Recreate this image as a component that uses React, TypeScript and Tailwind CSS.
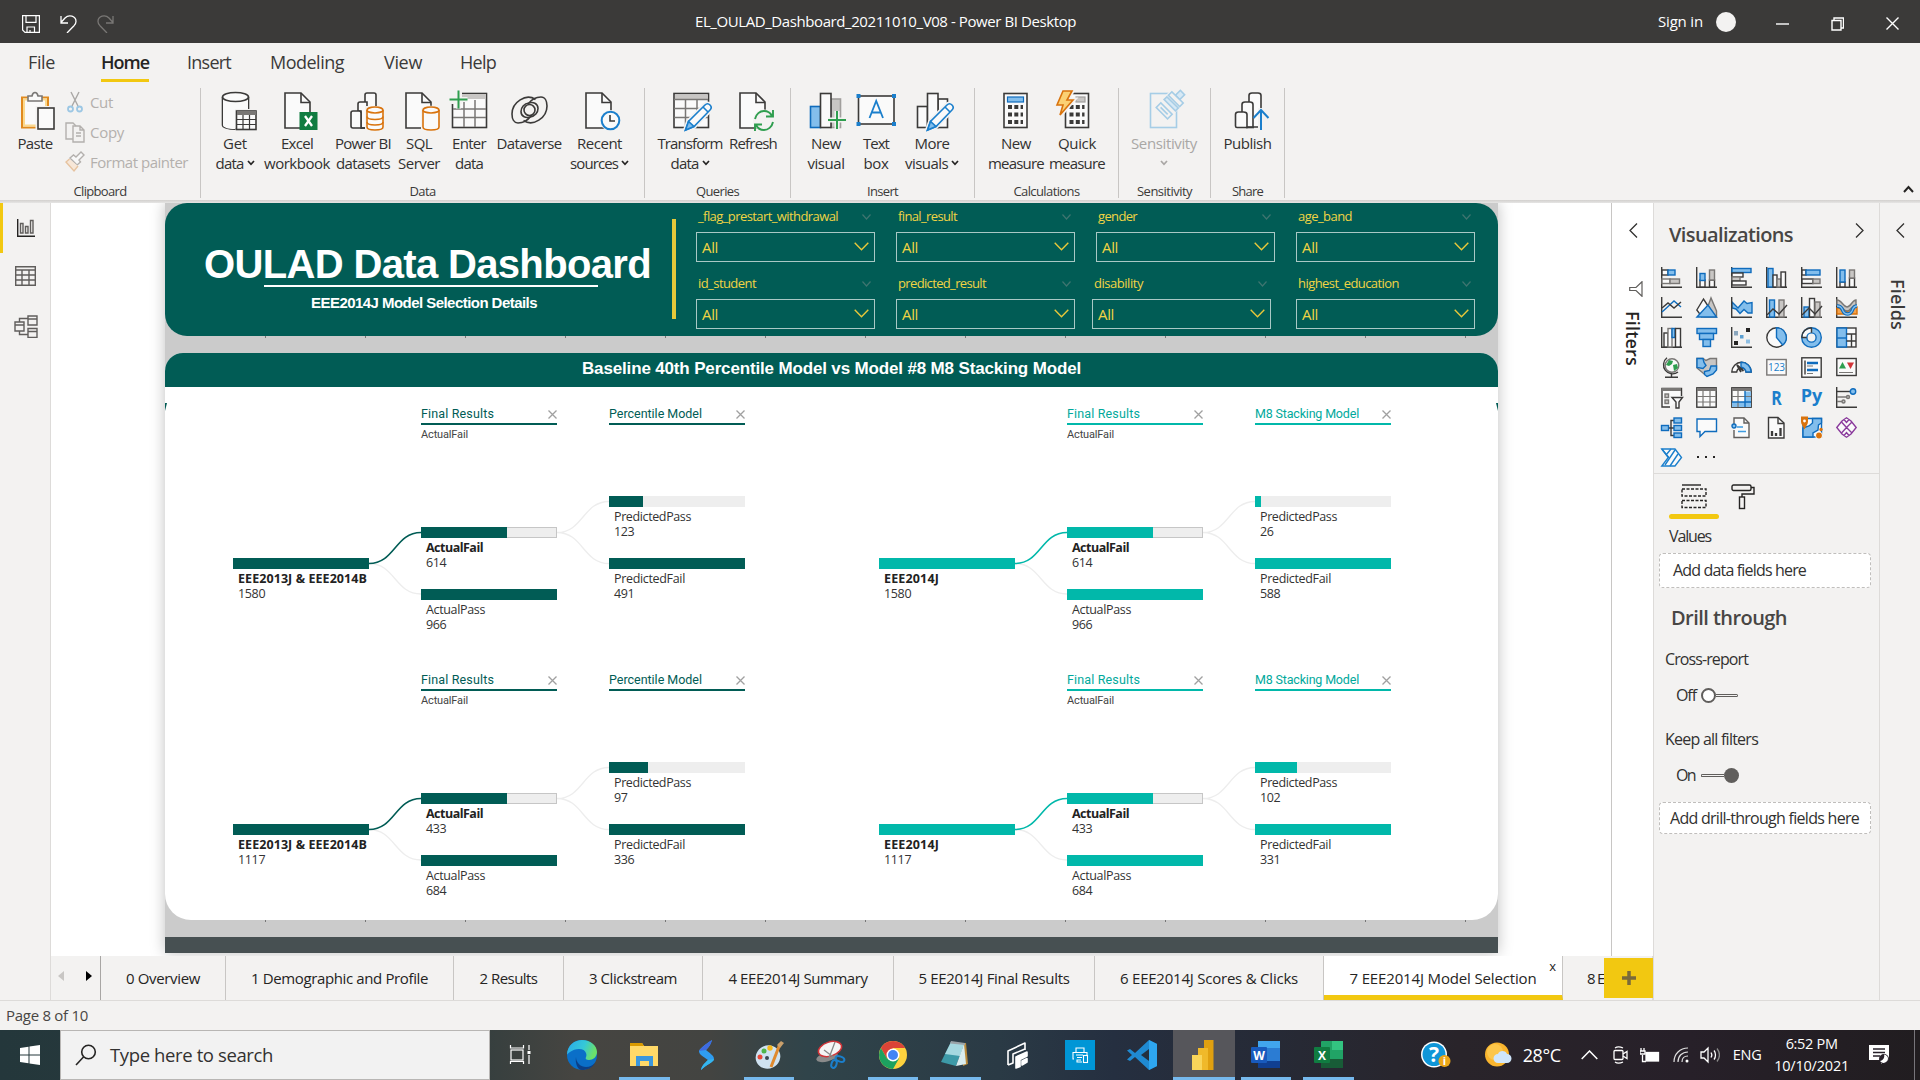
import React, { useLayoutEffect, useRef, useState } from "react";

/* Text whose tracking is tuned so that the run takes a given width. */
function Fit({ w, children, className = "" }: { w: number; children: string; className?: string }) {
  const ref = useRef<HTMLSpanElement>(null);
  const [ls, setLs] = useState(0);
  useLayoutEffect(() => {
    const el = ref.current;
    if (!el) return;
    const natural = el.getBoundingClientRect().width;
    setLs((w - natural) / children.length);
  }, [w, children]);
  return (
    <span className={"inline-block whitespace-nowrap " + className}>
      <span ref={ref} className="inline-block whitespace-pre" style={{ letterSpacing: ls + "px" }}>
        {children}
      </span>
    </span>
  );
}

function VFit({ h, children, className = "" }: { h: number; children: string; className?: string }) {
  const ref = useRef<HTMLSpanElement>(null);
  const [ls, setLs] = useState(0);
  useLayoutEffect(() => {
    if (!ref.current) return;
    setLs((h - ref.current.getBoundingClientRect().height) / children.length);
  }, [h, children]);
  return (
    <span ref={ref} className={"inline-block whitespace-nowrap [writing-mode:vertical-rl] " + className} style={{ letterSpacing: ls + "px" }}>
      {children}
    </span>
  );
}

const D = "#3b3a39";
const B = "#0f6cbd";

function Ico({ children, w = 40, h = 40 }: { children: React.ReactNode; w?: number; h?: number }) {
  return (
    <svg width={w} height={h} viewBox={`0 0 ${w} ${h}`} fill="none" stroke={D} strokeWidth="1.6" className="block shrink-0 overflow-visible">
      {children}
    </svg>
  );
}

const Chev = ({ c = "#252423" }: { c?: string }) => (
  <svg width="8" height="6" viewBox="0 0 8 6" fill="none" stroke={c} strokeWidth="1.7" className="block">
    <path d="M1 1 4 4.300 7 1" />
  </svg>
);

const Sheet = ({ x }: { x: number }) => (
  <g transform={`translate(${x} 0)`}>
    <path d="M1 2h16l9 9v26H1z" fill="#fafafa" />
    <path d="M17 2v9.500h9" />
  </g>
);
const Cyl = ({ bands = false }: { bands?: boolean }) => (
  <g stroke="#d9730d" fill="#fafafa">
    <path d="M24 19v17c0 2 3.500 3 8 3s8-1 8-3V19" stroke="#d9730d" />
    <ellipse cx="32" cy="19" rx="8" ry="3" />
    {bands && <path d="M24 25.500c0 2 3.500 3 8 3s8-1 8-3M24 31c0 2 3.500 3 8 3s8-1 8-3" fill="none" />}
  </g>
);
const Pencil = ({ dx = 0 }: { dx?: number }) => (
  <g transform={`translate(${dx} 0)`}>
    <path d="M15.500 39l3-8.500L35 14c1.500-1.500 3.500-1.500 5 0s1.500 3.500 0 5L24 35.500z" fill="#fafafa" stroke="#f3f2f1" strokeWidth="5" />
    <path d="M15.500 39l3-8.500L35 14c1.500-1.500 3.500-1.500 5 0s1.500 3.500 0 5L24 35.500z" fill="#fafafa" stroke="#1b7fcc" />
    <path d="M15.500 39l3-8.500 5.500 5z" fill="#83beec" stroke="#1b7fcc" />
    <path d="M33 16l5 5" stroke="#1b7fcc" />
  </g>
);
const Plus = ({ x, y, r = 9 }: { x: number; y: number; r?: number }) => (
  <g>
    <path d={`M${x - r} ${y}h${2 * r}M${x} ${y - r}v${2 * r}`} stroke="#f3f2f1" strokeWidth="5" />
    <path d={`M${x - r} ${y}h${2 * r}M${x} ${y - r}v${2 * r}`} stroke="#2f9e4f" strokeWidth="2" />
  </g>
);

const R: Record<string, React.ReactNode> = {
  paste: (
    <Ico>
      <rect x="7" y="6.500" width="26" height="30" fill="#fafafa" stroke="#e08a1e" strokeWidth="2" />
      <rect x="9" y="8.500" width="22" height="26" stroke="#fbd98e" strokeWidth="2" />
      <path d="M13 10V5h4c.5-2.500 2-3.500 3-3.500S22.500 2.500 23 5h4v5z" fill="#fafafa" stroke="#797775" />
      <rect x="22.500" y="17" width="17" height="22" fill="#fafafa" stroke="#f3f2f1" strokeWidth="4" />
      <rect x="23" y="17" width="16" height="21" fill="#fafafa" />
    </Ico>
  ),
  getdata: (
    <Ico>
      <path d="M7.500 6v28c0 2.500 5.500 4.300 13 4.300M33.500 6v12" />
      <path d="M8 6v28c0 2.500 5 4 12 4V18h13V6z" fill="#fafafa" stroke="none" />
      <ellipse cx="20.500" cy="6" rx="13" ry="4.500" fill="#fafafa" />
      <rect x="21.500" y="20" width="19.500" height="18.500" fill="#fafafa" />
      <path d="M22 22h19" strokeWidth="4" stroke="#797775" />
      <path d="M22 28.500h19M22 33.500h19M28 24v14M34.500 24v14" strokeWidth="1.200" />
    </Ico>
  ),
  excel: (
    <Ico>
      <Sheet x={7} />
      <rect x="22.500" y="21" width="18" height="18" fill="#107c41" stroke="none" />
      <path d="M28 25l7 10M35 25l-7 10" stroke="#fff" strokeWidth="2.300" />
    </Ico>
  ),
  pbi: (
    <Ico>
      <path d="M22 11V4c0-1 .8-2 2-2h7c1.200 0 2 1 2 2v12H22z" fill="#fafafa" />
      <path d="M15 20v-7c0-1 .8-2 2-2h7v26h-6V20z" fill="#fafafa" />
      <path d="M8 22c0-1 .8-2 2-2h6c1.200 0 2 1 2 2v15H10c-1.200 0-2-.8-2-2z" fill="#fafafa" />
      <path d="M18 37h5" />
      <rect x="22" y="15" width="19" height="25" fill="#f3f2f1" stroke="none" />
      <Cyl bands />
    </Ico>
  ),
  sql: (
    <Ico>
      <Sheet x={6} />
      <path d="M22 40V18c2-4 16-4 19-1v22z" fill="#f3f2f1" stroke="none" />
      <Cyl />
    </Ico>
  ),
  enter: (
    <Ico>
      <rect x="3.500" y="2.500" width="34" height="34" fill="#fafafa" />
      <rect x="13" y="3" width="24" height="5" fill="#c8c6c4" stroke="none" />
      <path d="M4 18h33M4 26.500h33M15 9v27M26 9v27" stroke="#797775" strokeWidth="1.500" />
      <rect x="0" y="0" width="13" height="13" fill="#f3f2f1" stroke="none" />
      <Plus x={9.500} y={8.500} />
    </Ico>
  ),
  dataverse: (
    <Ico>
      <g strokeWidth="1.600" fill="none">
        <path id="swirl" d="M26.500 8.500C17 2 3 11 3 23c0 5 2 9 6 9 6 0 10-3 13-7M22 25.500c-5 2.500-10 0-10-5 0-4 3-8 8-8.500" />
        <path d="M26.500 8.500C17 2 3 11 3 23c0 5 2 9 6 9 6 0 10-3 13-7M22 25.500c-5 2.500-10 0-10-5 0-4 3-8 8-8.500" transform="rotate(180 20.500 19)" />
        <circle cx="20.500" cy="19" r="5.500" />
      </g>
    </Ico>
  ),
  recent: (
    <Ico>
      <Sheet x={5} />
      <circle cx="30.500" cy="29.500" r="10.500" fill="#f3f2f1" stroke="none" />
      <circle cx="30.500" cy="29.500" r="8.800" fill="#fafafa" stroke="#1b7fcc" strokeWidth="2" />
      <path d="M30 24v6h5" />
    </Ico>
  ),
  transform: (
    <Ico>
      <rect x="4" y="2.500" width="34.500" height="34" fill="#fafafa" />
      <rect x="5" y="3.500" width="33" height="4.500" fill="#c8c6c4" stroke="none" />
      <path d="M4 8.500h34M4 17.500h34M4 26.500h34M15.500 9v27M27 9v27" stroke="#797775" strokeWidth="1.500" />
      <Pencil />
    </Ico>
  ),
  refresh: (
    <Ico>
      <Sheet x={6} />
      <circle cx="31" cy="29.500" r="11" fill="#f3f2f1" stroke="none" />
      <path d="M22 28c1-5 5-8 9-8 3.500 0 6.500 2 8 5M40 31c-1 5-5 8-9 8-3.500 0-6.500-2-8-5M40 19v6.500h-7M22 40v-6.500h7" stroke="#2f9e4f" strokeWidth="1.900" />
    </Ico>
  ),
  newvis: (
    <Ico>
      <rect x="4.500" y="15.500" width="10" height="21" fill="#83beec" stroke={B} />
      <rect x="25" y="8" width="9.500" height="28.500" fill="#c8c6c4" stroke="#a19f9d" />
      <rect x="14.500" y="2.500" width="10.500" height="34" fill="#fafafa" />
      <Plus x={31} y={29} />
    </Ico>
  ),
  textbox: (
    <Ico>
      <rect x="2.500" y="5" width="35.500" height="28" fill="#fafafa" />
      <path d="M13.500 27 20.200 10l6.800 17M15.800 21.500h9" stroke="#1b7fcc" strokeWidth="1.800" />
      <g fill="#1b7fcc" stroke="none">
        <rect x="0.500" y="3" width="4" height="4" /><rect x="36" y="3" width="4" height="4" />
        <rect x="0.500" y="31" width="4" height="4" /><rect x="36" y="31" width="4" height="4" />
      </g>
    </Ico>
  ),
  morevis: (
    <Ico>
      <rect x="5.500" y="15.500" width="10" height="21" fill="#fafafa" />
      <rect x="26" y="8" width="9.500" height="28.500" fill="#fafafa" />
      <rect x="15.500" y="2.500" width="10.500" height="34" fill="#fafafa" />
      <Pencil />
    </Ico>
  ),
  calc: (
    <Ico>
      <rect x="8" y="2.500" width="23" height="34" fill="#fafafa" />
      <rect x="11.500" y="6" width="16" height="5" fill="#83beec" stroke={B} strokeWidth="1.200" />
      <path d="M12 16h15M12 23.500h15M12 31h15" strokeWidth="4" strokeDasharray="4 2.300" />
    </Ico>
  ),
  quick: (
    <Ico>
      <rect x="8.500" y="2.500" width="23" height="34" fill="#fafafa" />
      <rect x="19" y="6" width="9" height="5" fill="#c8c6c4" stroke="#a19f9d" strokeWidth="1.200" />
      <path d="M12.500 16h15M12.500 23.500h15M12.500 31h15" strokeWidth="4" strokeDasharray="4 2.300" />
      <path d="M6 0h9l-5 9h6L3 24l3-10H0z" fill="#fbd98e" stroke="#f3f2f1" strokeWidth="5" />
      <path d="M6 0h9l-5 9h6L3 24l3-10H0z" fill="#fbd174" stroke="#d9730d" />
    </Ico>
  ),
  sens: (
    <Ico>
      <g stroke="#a6cde6">
        <rect x="6.500" y="2.500" width="26" height="34" />
        <g transform="rotate(-45 29 9)"><rect x="21" y="2" width="16" height="16" fill="#f3f2f1" stroke="#f3f2f1" strokeWidth="3" /></g>
        <g transform="translate(0 2) rotate(45 30 8)">
          <rect x="27" y="-4" width="6" height="7" fill="#d7e9f5" />
          <rect x="22" y="3" width="16" height="5" fill="#f3f2f1" />
          <rect x="22" y="10" width="16" height="4" fill="#d7e9f5" />
        </g>
        <g transform="rotate(-45 20 20)"><rect x="17" y="12" width="6.500" height="16" /><path d="M20.200 15v10" /></g>
      </g>
    </Ico>
  ),
  publish: (
    <Ico>
      <path d="M21 11V4.500c0-1 1-2.500 3-2.500h6c2 0 3 1 3 2.500V36H21z" fill="#fafafa" />
      <path d="M14 21v-7.500c0-1 1-2.500 3-2.500h5c1.500 0 3 1 3 2.500V36H14z" fill="#fafafa" />
      <path d="M7.500 23.500c0-1 1-2.500 3-2.500h5c2 0 3.500 1 3.500 2.500V36.500H9c-1 0-1.500-.5-1.500-1.500z" fill="#fafafa" />
      <path d="M18 36.500h8" />
      <path d="M33 39V17" stroke="#f3f2f1" strokeWidth="6" />
      <path d="M33 39V19M25.500 27 33 19l7.500 8" stroke="#1b7fcc" strokeWidth="2" />
    </Ico>
  ),
};

type Btn = { k: string; w: string; a: [string, number]; b?: [string, number]; chev?: boolean; dim?: boolean };

function RibbonButton({ k, w, a, b, chev, dim }: Btn) {
  return (
    <div className={"flex flex-col items-center " + w + (dim ? " text-[#a9a7a5]" : " text-[#323130]")}>
      {R[k]}
      <div className="mt-[2px] flex h-5 items-center text-[15px]"><Fit w={a[1]}>{a[0]}</Fit></div>
      <div className="flex h-5 items-center gap-[3px] text-[15px]">
        {b && <Fit w={b[1]}>{b[0]}</Fit>}
        {chev && <Chev c={dim ? "#a9a7a5" : "#252423"} />}
      </div>
    </div>
  );
}

function Group({ w, label, lw, pad, buttons }: { w: string; label: string; lw: number; pad: string; buttons: Btn[] }) {
  return (
    <div className={"flex h-[110px] shrink-0 flex-col border-r border-[#c8c6c4] " + w}>
      <div className={"flex h-[93px] pt-[3px] " + pad}>
        {buttons.map((b) => <RibbonButton key={b.k} {...b} />)}
      </div>
      <div className="flex h-[17px] items-center justify-center pt-1 text-[13px] text-[#3b3a39]"><Fit w={lw}>{label}</Fit></div>
    </div>
  );
}

function Ribbon() {
  return (
    <div className="flex h-[157px] flex-col bg-[#f3f2f1]">
      <div className="flex h-[45px] items-start pl-[28px] text-[18px] text-[#3b3a39]">
        {([["File", 27, "mr-[46px]"], ["Home", 48, "mr-[38px]"], ["Insert", 44, "mr-[39px]"], ["Modeling", 74, "mr-[40px]"], ["View", 38, "mr-[38px]"], ["Help", 36, ""]] as [string, number, string][]).map(([t, w, m]) => (
          <div key={t} className={"flex h-[39px] items-center " + m + (t === "Home" ? " border-b-[3px] border-[#f2c811] pt-[3px] font-semibold text-[#252423]" : "")}>
            <Fit w={w}>{t}</Fit>
          </div>
        ))}
      </div>
      <div className="flex h-[112px]">
        <div className="flex h-[110px] w-[201px] shrink-0 flex-col border-r border-[#c8c6c4]">
          <div className="flex h-[93px] pl-3 pt-[3px]">
            <RibbonButton k="paste" w="w-[46px]" a={["Paste", 35]} />
            <div className="-mt-1 flex flex-col pl-[7px] text-[15px] text-[#b3b0ad]">
              <div className="flex h-[30px] items-center gap-[5px]">
                <svg width="20" height="22" viewBox="0 0 20 22" fill="none" stroke="#a9a7a5" strokeWidth="1.400"><path d="M6 1l7 14M14 1 7 15" /><circle cx="5.500" cy="18" r="2.500" stroke="#9cc7e4" strokeWidth="1.800" /><circle cx="14.500" cy="18" r="2.500" stroke="#9cc7e4" strokeWidth="1.800" /></svg>
                <Fit w={23}>Cut</Fit>
              </div>
              <div className="flex h-[30px] items-center gap-[5px]">
                <svg width="20" height="22" viewBox="0 0 20 22" fill="none" stroke="#b3b0ad" strokeWidth="1.400"><path d="M8 18H1V2h7l3 3" /><path d="M8 5h7l4 4v12H8zM15 5v4h4M11 12h5M11 15h5" /></svg>
                <Fit w={34}>Copy</Fit>
              </div>
              <div className="flex h-[30px] items-center gap-[5px]">
                <svg width="20" height="22" viewBox="0 0 20 22" fill="none" stroke="#b3b0ad" strokeWidth="1.400"><path d="M11 6l5-5 3 3-5 5 1.500 2-3.500 3-7-7 3.500-3z" fill="#f8f8f8" /><path d="M4.500 8 1 11l8 9 4-5" stroke="#e6c3a0" fill="#f7e7d8" /></svg>
                <Fit w={98}>Format painter</Fit>
              </div>
            </div>
          </div>
          <div className="flex h-[17px] items-center justify-center pt-1 text-[13px] text-[#3b3a39]"><Fit w={53}>Clipboard</Fit></div>
        </div>
        <Group w="w-[444px]" label="Data" lw={26} pad="pl-[5px]" buttons={[
          { k: "getdata", w: "w-[58px]", a: ["Get", 24], b: ["data", 28], chev: true },
          { k: "excel", w: "w-[66px]", a: ["Excel", 32], b: ["workbook", 66] },
          { k: "pbi", w: "w-[66px]", a: ["Power BI", 56], b: ["datasets", 54] },
          { k: "sql", w: "w-[46px]", a: ["SQL", 26], b: ["Server", 42] },
          { k: "enter", w: "w-[54px]", a: ["Enter", 34], b: ["data", 28] },
          { k: "dataverse", w: "w-[66px]", a: ["Dataverse", 65] },
          { k: "recent", w: "w-[75px]", a: ["Recent", 45], b: ["sources", 48], chev: true },
        ]} />
        <Group w="w-[146px]" label="Queries" lw={43} pad="pl-[10px]" buttons={[
          { k: "transform", w: "w-[70px]", a: ["Transform", 65], b: ["data", 28], chev: true },
          { k: "refresh", w: "w-[56px]", a: ["Refresh", 48] },
        ]} />
        <Group w="w-[184px]" label="Insert" lw={31} pad="pl-[6px]" buttons={[
          { k: "newvis", w: "w-[58px]", a: ["New", 30], b: ["visual", 37] },
          { k: "textbox", w: "w-[42px]", a: ["Text", 26], b: ["box", 25] },
          { k: "morevis", w: "w-[70px]", a: ["More", 35], b: ["visuals", 43], chev: true },
        ]} />
        <Group w="w-[144px]" label="Calculations" lw={66} pad="pl-[9px]" buttons={[
          { k: "calc", w: "w-[64px]", a: ["New", 30], b: ["measure", 56] },
          { k: "quick", w: "w-[58px]", a: ["Quick", 38], b: ["measure", 56] },
        ]} />
        <Group w="w-[92px]" label="Sensitivity" lw={55} pad="pl-0" buttons={[
          { k: "sens", w: "w-[90px]", a: ["Sensitivity", 66], chev: true, dim: true },
        ]} />
        <Group w="w-[74px]" label="Share" lw={31} pad="pl-0" buttons={[
          { k: "publish", w: "w-[73px]", a: ["Publish", 48] },
        ]} />
        <div className="flex flex-1 items-end justify-end pb-[7px] pr-[6px]">
          <svg width="11" height="8" viewBox="0 0 11 8" fill="none" stroke="#252423" strokeWidth="2"><path d="M1 7l4.500-5L10 7" /></svg>
        </div>
      </div>
    </div>
  );
}

function TitleBar() {
  return (
    <div className="flex h-[43px] items-center bg-[#3b3a39] text-[15px] text-white">
      <div className="flex w-[695px] items-center gap-[20px] pl-[22px]">
        <svg width="18" height="18" viewBox="0 0 18 18" fill="none" stroke="#fff" strokeWidth="1.200" className="mt-1"><path d="M.6.600h16.800v16.800H3L.6 15zM4 .600v6.800h10V.600M5 17v-5h7.500v5M8 17v-2" /></svg>
        <svg width="17" height="18" viewBox="0 0 17 18" fill="none" stroke="#fff" strokeWidth="1.300" className="mt-1"><path d="M1 1v7h7M1 7.500l4-4.500C9-1 16 1 16 6.500c0 2-1 3-2 4.200L7 18" /></svg>
        <svg width="17" height="18" viewBox="0 0 17 18" fill="none" stroke="#797775" strokeWidth="1.300" className="mt-1"><path d="M16 1v7H9M16 7.500l-4-4.500C8-1 1 1 1 6.500c0 2 1 3 2 4.200L10 18" /></svg>
      </div>
      <div className="w-[963px]"><Fit w={381}>EL_OULAD_Dashboard_20211010_V08 - Power BI Desktop</Fit></div>
      <Fit w={45}>Sign in</Fit>
      <div className="ml-[13px] h-5 w-5 rounded-full bg-[#f3f2f1]" />
      <div className="flex flex-1 items-center justify-between pl-[40px] pr-[21px] pt-1">
        <svg width="13" height="13" viewBox="0 0 13 13" stroke="#fff" strokeWidth="1.400"><path d="M0 7h13" /></svg>
        <svg width="13" height="14" viewBox="0 0 13 14" fill="none" stroke="#fff" strokeWidth="1.400"><path d="M1 3.500h9v9.500H1zM3 3V1h9.500v10H10" /></svg>
        <svg width="13" height="13" viewBox="0 0 13 13" stroke="#fff" strokeWidth="1.400"><path d="M.5.500l12 12M12.500.500l-12 12" /></svg>
      </div>
    </div>
  );
}

function Slicer({ name, w, cls = "" }: { name: string; w: number; cls?: string }) {
  return (
    <div className={"w-[179px] " + cls}>
      <div className="flex h-[28px] items-center justify-between pl-[2px] pr-1 text-[13px] text-[#f0d444]">
        <Fit w={w}>{name}</Fit>
        <svg width="9" height="6" viewBox="0 0 9 6" fill="none" stroke="#3f7570" strokeWidth="1.200"><path d="M.5.500l4 4.500 4-4.500" /></svg>
      </div>
      <div className="mt-px flex h-[30px] items-center justify-between border border-[#a9c8c5] pl-[5px] pr-[5px] pt-px text-[15px] text-[#f0d444]">
        <Fit w={16}>All</Fit>
        <svg width="15" height="9" viewBox="0 0 15 9" fill="none" stroke="#e8c83a" strokeWidth="1.400" className="mb-[2px]"><path d="M.7.700l6.800 7 6.800-7" /></svg>
      </div>
    </div>
  );
}

type Leaf = { label: string; value: string; w: number };
type Tree = { root: string; rw: number; total: string; fail: string; pass: string; ratio: number; pp: string; pf: string; pr: number; head: string; hw: number; bar: string; ink: string; stroke: string };

function Node({ at, leaf, bar, fill = 1, bold = false, outlined = false }: { at: string; leaf: Leaf; bar: string; fill?: number; bold?: boolean; outlined?: boolean }) {
  return (
    <div className={"absolute w-[135.500px] text-[12.500px] leading-[15px] text-[#333] " + at}>
      <div className={"h-[11px] bg-[#eeeeee] " + (outlined ? "outline outline-1 -outline-offset-1 outline-[#c6c6c6]" : "")}>
        <div className={"relative h-full " + bar} style={{ width: fill * 100 + "%" }} />
      </div>
      <div className={"pl-[5px] pt-[2px] " + (bold ? "font-bold text-[#222]" : "")}><Fit w={leaf.w}>{leaf.label}</Fit></div>
      <div className="pl-[5px]"><Fit w={leaf.value.length * 6.8}>{leaf.value}</Fit></div>
    </div>
  );
}

function Head({ at, t, w, ink, bar }: { at: string; t: string; w: number; ink: string; bar: string }) {
  return (
    <div className={"absolute w-[136px] font-['Roboto'] text-[12.500px] " + at}>
      <div className={"flex h-[19px] items-center justify-between pt-px " + ink}>
        <Fit w={w}>{t}</Fit>
        <svg width="9" height="9" viewBox="0 0 9 9" stroke="#a0a0a0" strokeWidth="1.300"><path d="M.5.500l8 8M8.500.500l-8 8" /></svg>
      </div>
      <div className={"h-[2px] " + bar} />
    </div>
  );
}

/* Decomposition tree; nodes sit on a free 520x240 canvas. */
function DecompTree({ t, at }: { t: Tree; at: string }) {
  return (
    <div className={"absolute h-[240px] w-[520px] " + at}>
      <svg width="520" height="240" viewBox="0 0 520 240" fill="none" className="absolute left-0 top-0">
        <path d="M136 159.500C162 159.500 162 190 188 190M324 128.500C350 128.500 350 97.500 376 97.500M324 128.500C350 128.500 350 159.500 376 159.500" stroke="#ededed" strokeWidth="1.300" />
        <path d="M136 159.500C162 159.500 162 128.500 188 128.500" stroke={t.stroke} strokeWidth="1.600" />
      </svg>
      <Head at="left-[188px] top-0" t="Final Results" w={73} ink={t.ink} bar={t.bar} />
      <Head at="left-[376px] top-0" t={t.head} w={t.hw} ink={t.ink} bar={t.bar} />
      <div className="absolute left-[188px] top-[23px] font-['Roboto'] text-[11px] leading-4 text-[#444]"><Fit w={47}>ActualFail</Fit></div>
      <Node at="left-0 top-[154px]" leaf={{ label: t.root, value: t.total, w: t.rw }} bar={t.bar} bold />
      <Node at="left-[188px] top-[123px]" leaf={{ label: "ActualFail", value: t.fail, w: 57 }} bar={t.bar} fill={t.ratio} bold outlined />
      <Node at="left-[188px] top-[185px]" leaf={{ label: "ActualPass", value: t.pass, w: 59 }} bar={t.bar} />
      <Node at="left-[376px] top-[92px]" leaf={{ label: "PredictedPass", value: t.pp, w: 77 }} bar={t.bar} fill={t.pr} />
      <Node at="left-[376px] top-[154px]" leaf={{ label: "PredictedFail", value: t.pf, w: 71 }} bar={t.bar} />
    </div>
  );
}

const dark = { bar: "bg-[#015c55]", ink: "text-[#015c55]", stroke: "#015c55", root: "EEE2013J & EEE2014B", rw: 129, head: "Percentile Model", hw: 93 };
const lite = { bar: "bg-[#01b8aa]", ink: "text-[#01a99c]", stroke: "#01b8aa", root: "EEE2014J", rw: 55, head: "M8 Stacking Model", hw: 104 };

const Ticks = () => (
  <div className="flex h-1 justify-between pl-[100px] pr-[32px]">
    {Array.from({ length: 13 }, (_, i) => <div key={i} className="h-[2px] w-px bg-[#777]" />)}
  </div>
);

function Report() {
  return (
    <div className="flex h-[750px] w-[1333px] shrink-0 flex-col bg-[#cbcbcb] shadow-[0_0_14px_rgba(0,0,0,0.25)]">
      <div className="flex h-[133px] shrink-0 rounded-[22px] bg-[#015c55]">
        <div className="flex w-[507px] flex-col items-center pl-[18px] font-['Liberation_Sans'] font-bold text-white">
          <div className="mt-[37px] h-[45px] text-[40px] leading-[48px]"><Fit w={447}>OULAD Data Dashboard</Fit></div>
          <div className="ml-[6px] h-[2px] w-[334px] bg-white" />
          <div className="mr-[7px] mt-[5px] text-[15px] leading-[22px]"><Fit w={226}>EEE2014J Model Selection Details</Fit></div>
        </div>
        <div className="mt-[16px] h-[100px] w-1 bg-[#e6c93a]" />
        <div className="ml-[20px] flex flex-col">
          <div className="flex gap-[21px]">
            <Slicer name="_flag_prestart_withdrawal" w={140} />
            <Slicer name="final_result" w={59} />
            <Slicer name="gender" w={39} />
            <Slicer name="age_band" w={54} />
          </div>
          <div className="flex gap-[21px] pt-[8px]">
            <Slicer name="id_student" w={58} />
            <Slicer name="predicted_result" w={88} />
            <Slicer name="disability" w={49} cls="-ml-1 mr-1" />
            <Slicer name="highest_education" w={101} />
          </div>
        </div>
      </div>
      <div className="h-[17px] shrink-0"><Ticks /></div>
      <div className="flex h-[567px] shrink-0 flex-col overflow-hidden rounded-b-[26px] rounded-t-[18px] bg-white">
        <div className="flex h-[34px] shrink-0 items-center justify-center bg-[#015c55] pb-[3px] font-['Liberation_Sans'] text-[17px] font-bold text-white">
          <Fit w={499}>Baseline 40th Percentile Model vs Model #8 M8 Stacking Model</Fit>
        </div>
        <div className="relative flex-1">
          <div className="absolute left-0 top-[16px] h-2 w-[2px] bg-[#015c55] [clip-path:polygon(0_0,100%_0,0_100%)]" />
          <div className="absolute right-0 top-[16px] h-2 w-[2px] bg-[#015c55] [clip-path:polygon(0_0,100%_0,100%_100%)]" />
          <DecompTree at="left-[68px] top-[17px]" t={{ ...dark, total: "1580", fail: "614", pass: "966", ratio: 0.637, pp: "123", pf: "491", pr: 0.25 }} />
          <DecompTree at="left-[714px] top-[17px]" t={{ ...lite, total: "1580", fail: "614", pass: "966", ratio: 0.637, pp: "26", pf: "588", pr: 0.044 }} />
          <DecompTree at="left-[68px] top-[283px]" t={{ ...dark, total: "1117", fail: "433", pass: "684", ratio: 0.633, pp: "97", pf: "336", pr: 0.289 }} />
          <DecompTree at="left-[714px] top-[283px]" t={{ ...lite, total: "1117", fail: "433", pass: "684", ratio: 0.633, pp: "102", pf: "331", pr: 0.308 }} />
        </div>
      </div>
      <div className="h-[17px] shrink-0"><Ticks /></div>
      <div className="h-4 bg-[#475052]" />
    </div>
  );
}

const L = "#83beec";
const G = "#c8c6c4";
const W = "#fafafa";
const axis = <path d="M.7 0v20.300H21" />;

const V: React.ReactNode[] = [
  <>{axis}<rect x="1" y="3" width="6" height="5" fill={W} /><rect x="7" y="3" width="7" height="5" fill={L} stroke={B} /><rect x="1" y="12" width="8" height="4.500" fill={W} stroke="#797775" /><rect x="9" y="12" width="9.500" height="4.500" fill={G} stroke="#797775" /></>,
  <>{axis}<rect x="4" y="13" width="5" height="7" fill={W} /><rect x="4" y="6.500" width="5" height="7" fill={L} stroke={B} /><rect x="13.500" y="13" width="5" height="7" fill={W} /><rect x="13.500" y="3" width="5" height="10" fill={G} stroke="#797775" /></>,
  <>{axis}<rect x="1" y="1.500" width="19" height="4" fill={L} stroke={B} /><rect x="1" y="6" width="11" height="4" fill={W} /><rect x="1" y="10" width="8" height="4" fill={G} stroke="#797775" /><rect x="1" y="14" width="14" height="4" fill={W} /></>,
  <>{axis}<rect x="2" y="1.500" width="5" height="18.500" fill={L} stroke={B} /><rect x="7" y="8" width="4" height="12" fill={W} /><rect x="11" y="12" width="4" height="8" fill={G} stroke="#797775" /><rect x="15" y="5" width="4.500" height="15" fill={W} /></>,
  <>{axis}<rect x="1" y="3" width="4" height="5" fill={W} /><rect x="5" y="3" width="14" height="5" fill={L} stroke={B} /><rect x="1" y="12" width="11" height="4.500" fill={W} /><rect x="12" y="12" width="7" height="4.500" fill={G} stroke="#797775" /></>,
  <>{axis}<rect x="4" y="15" width="5" height="5" fill={W} /><rect x="4" y="3" width="5" height="12" fill={L} stroke={B} /><rect x="13.500" y="11" width="5" height="9" fill={W} /><rect x="13.500" y="3" width="5" height="8" fill={G} stroke="#797775" /></>,
  <>{axis}<path d="M1 15 6 10.500 13 4l7 6" stroke={B} /><path d="M1 11l6-5 6 5 7-6" /></>,
  <><path d="M8 20 15 1l5.500 13v6z" fill={G} stroke="#797775" /><path d="M.8 13 7.500 2 14 12 6 20z" fill={W} /><path d="M1 20 12 8l8.500 12z" fill={L} stroke={B} /></>,
  <><path d="M1 5l6 6 6-7 3 2.500 5-1V16h-4l-4-3.500-4 4-4-4.500-4-1z" fill={L} stroke={B} />{axis}</>,
  <>{axis}<rect x="3.500" y="3" width="5" height="17" fill={L} stroke={B} /><rect x="13" y="3" width="5" height="17" fill={G} stroke="#797775" /><path d="M1 18l6-6 6 5 8-9" /></>,
  <>{axis}<rect x="3" y="10" width="5" height="10" fill={L} stroke={B} /><rect x="8.500" y="1.500" width="5" height="18.500" fill={W} /><rect x="14" y="5" width="5" height="15" fill={G} stroke="#797775" /><path d="M1 18l7-7 6 6 7-8" /></>,
  <>{axis}<path d="M1 11h6l4 4 5-5h5v7H1z" fill="#f3a14a" stroke="#d9730d" /><path d="M1 3c5 0 6 7 10 7s5-7 9-7v5c-4 0-5 6-9 6S6 8 1 8z" fill={G} stroke="#797775" /><path d="M1 9c5 0 5 3 6 5 2 4 7 4 9 0 1-3 2-5 5-5" stroke={B} strokeWidth="3.500" /><path d="M1 9c5 0 5 3 6 5 2 4 7 4 9 0 1-3 2-5 5-5" stroke={L} strokeWidth="1.300" /></>,
  <>{axis}<rect x="3" y="6" width="4" height="14" fill={W} /><rect x="7" y="1.500" width="4" height="18.500" fill={W} stroke="#797775" /><rect x="11" y="1.500" width="3" height="9" fill={L} stroke={B} /><rect x="14.500" y="1.500" width="5" height="18.500" fill={W} /></>,
  <g fill={L} stroke={B}><rect x="1" y="1.500" width="19.500" height="5" /><rect x="3.500" y="6.500" width="14" height="6" /><rect x="7" y="12.500" width="7.500" height="7" /></g>,
  <>{axis}<g stroke="none"><rect x="15" y="1" width="4" height="4" fill="#252423" /><rect x="3" y="4" width="4" height="4.500" fill="#8aa6bd" /><rect x="9" y="8" width="3.500" height="3.500" fill="#5c9fd1" /><rect x="3" y="14" width="4" height="4" fill="#252423" /><rect x="15" y="12.500" width="4" height="4" fill="#8fbfe3" /></g></>,
  <><circle cx="10.500" cy="10.500" r="9.700" fill={W} /><path d="M10.500.800a9.700 9.700 0 0 1 6.200 17.200L10.500 10.500z" fill={L} stroke={B} /></>,
  <><circle cx="10.500" cy="10.500" r="7.200" stroke={W} strokeWidth="5" /><path d="M10.500 3.300A7.200 7.200 0 1 1 3.300 10.500" stroke={L} strokeWidth="5" /><circle cx="10.500" cy="10.500" r="9.800" stroke={B} /><circle cx="10.500" cy="10.500" r="4.600" stroke={B} /><path d="M.7 10.500h5M10.500.700v5M.7 10.500A9.800 9.800 0 0 1 10.500.700" /></>,
  <><rect x="1" y="1" width="19" height="19" fill={W} /><path d="M1 1h9.500v19H1z" fill={L} stroke={B} /><path d="M1 11h9.500" stroke={B} /><path d="M10.500 7H20M10.500 14H20M15.500 7v13" /></>,
  <><circle cx="11" cy="8.500" r="6.800" fill={W} stroke="#797775" /><path d="M8 3l4 1-1 3-3 2-3-1zM12 8l4-1 1 4-4 3z" fill="#2f9e4f" stroke="none" /><path d="M6 .8A8.800 8.800 0 1 0 17 15M10.500 17.500v2.500M4 20.300h13" /></>,
  <><path d="M1 1.500h6l3 2 4-2h6.500V12L17 16l-6 3-4-3-6-5z" fill={G} stroke="#797775" /><path d="M1 1.500h6l1 4 2 3-3 3-6-1z" fill={L} stroke={B} /><path d="M8.500 14.500l5-1L15 9h5.500v4L17 17l-6 2.500-2.500-2z" fill={L} stroke={B} /></>,
  <><path d="M.8 15A9.700 9.700 0 0 1 20.200 15H15a4.700 4.700 0 0 0-9.300 0z" fill={W} /><path d="M10 5.300A9.700 9.700 0 0 1 20.200 15H15c0-2-2-4.500-5-4.700z" fill={L} stroke={B} /><path d="M10 15 6 8l6.500 6" strokeWidth="1.800" /></>,
  <><rect x=".8" y="2.500" width="19.400" height="15.500" fill={W} stroke="#797775" /><text x="10.500" y="14" textAnchor="middle" fontSize="10" fill="#1b7fcc" stroke="none" fontFamily="Open Sans">123</text></>,
  <><rect x=".8" y=".8" width="19.400" height="19.400" fill={W} /><path d="M4 3.500v14" /><path d="M6 6h11M6 13h11" stroke={B} strokeWidth="2.400" /><path d="M6 9h6M6 16.500h6" stroke="#797775" strokeWidth="1.200" /></>,
  <><rect x=".8" y="1.500" width="19.400" height="17" fill={W} /><path d="M3 11.500 6.500 5l3.500 6.500z" fill="#2f9e4f" stroke="none" /><path d="M11 5.500h7L14.500 12z" fill="#d13438" stroke="none" /><path d="M3 15.500h14" stroke="#797775" strokeWidth="1" /></>,
  <><path d="M9 20H1V1.500h19.500V9" fill={W} /><path d="M1 2.500h19" strokeWidth="3" stroke="#797775" /><rect x="4" y="7" width="3.500" height="3.500" fill={G} stroke="#797775" /><rect x="4" y="13" width="3.500" height="3.500" fill={G} stroke="#797775" /><path d="M11 10.500h10.500L18 15v6h-3v-6z" fill={W} /></>,
  <><rect x=".8" y=".8" width="19.400" height="19.400" fill={W} /><path d="M1 2.500h19.500" strokeWidth="3" stroke="#797775" /><path d="M1 9.500h19M1 15h19M7 4v16M14 4v16" strokeWidth="1.200" stroke="#797775" /></>,
  <><rect x=".8" y=".8" width="19.400" height="19.400" fill={W} /><path d="M14 4.500h6V20H1v-5h13z" fill={L} stroke="none" /><path d="M1 2.500h19.500" strokeWidth="3" stroke="#797775" /><path d="M1 9.500h19M7 4v16" strokeWidth="1.200" stroke="#797775" /><path d="M1 15h19M14 4v16" stroke={B} /></>,
  <text x="10.500" y="17.500" textAnchor="middle" fontSize="19" fontWeight="700" fill="#1b7fcc" stroke="none" fontFamily="Open Sans" textLength="10.500" lengthAdjust="spacingAndGlyphs">R</text>,
  <text x="10.500" y="14.500" textAnchor="middle" fontSize="18" fontWeight="700" fill="#1b7fcc" stroke="none" fontFamily="Open Sans">Py</text>,
  <>{axis}<path d="M1 4.500h13" /><circle cx="17" cy="4.500" r="2.700" fill={L} stroke={B} /><path d="M1 10h10M1 14.500h6" stroke="#797775" /><circle cx="12" cy="10" r="1.500" fill={G} stroke="#797775" /><circle cx="7.500" cy="14.500" r="1.500" fill={G} stroke="#797775" /></>,
  <><path d="M7 11h6M13 3.500H10v15h3" /><g fill={L} stroke={B}><rect x=".5" y="8.500" width="7" height="5" /><rect x="13" y="1" width="7.500" height="5" /><rect x="13" y="8.500" width="7.500" height="5" /><rect x="13" y="16" width="7.500" height="4.500" /></g></>,
  <path d="M1 2h19.500v12.500H9L4 19.500v-5H1z" fill={W} stroke={B} />,
  <><path d="M3 7V1h10l5 5v14.500H3V13" fill={W} stroke="#605e5c" /><path d="M13 1v5h5" stroke="#605e5c" /><circle cx="3" cy="9" r="2" fill={L} stroke={B} /><path d="M6 10h6M7 14.500h8" stroke="#3d9be0" /></>,
  <><path d="M2.500.500H12l6 5.500v15H2.500z" fill={W} /><path d="M12 1v5.500h6" /><path d="M6 19v-5M10 19v-3M14.500 19v-8" strokeWidth="2.300" /></>,
  <><path d="M2 1.500h18.500V20H2z" fill={W} stroke={B} /><path d="M2 11v9h10v-4l5-3 .5-5 3-2V1.500h-9V6L8 9z" fill={L} stroke={B} /><path d="M3.500 12.500C2 9 0 7.500 0 4.500V-.5h7v5c0 3-2 4.500-3.500 8z" fill="#d9730d" stroke="none" /><circle cx="3.500" cy="4" r="1.400" fill="#fff" stroke="none" /><circle cx="18" cy="18.500" r="3.800" fill={W} stroke="none" /><circle cx="18" cy="18.500" r="2.900" fill="#d9730d" stroke="none" /><circle cx="20" cy="12.500" r="1.700" fill="#d9730d" stroke="none" /></>,
  <g stroke="#8a3a9c" fill={W}><path d="M.8 10.500 6 4l4.500-3.200L15 4l5.200 6.500L15 17l-4.500 3.200L6 17z" /><path d="M5.500 5l5 5.500L16 5M5.500 16l5-5.500L16 16M8 2.500l2.500 3 2.500-3M8 18.500l2.500-3 2.500 3" /></g>,
  <g stroke="#1b7fcc" fill={W}><path d="M.8 2H14l6.500 8.500L14 19H.8l6.500-8.500z" /><path d="M10 2 5 8M14 3 4 18M17 7 9 19M.8 2l7 8.500" /></g>,
  <g fill="#252423" stroke="none"><rect x="1" y="9" width="2" height="2" /><rect x="9" y="9" width="2" height="2" /><rect x="17" y="9" width="2" height="2" /></g>,
];

const ArrowL = () => <svg width="9" height="15" viewBox="0 0 9 15" fill="none" stroke="#323130" strokeWidth="1.300"><path d="M8 .500 1 7.500l7 7" /></svg>;
const ArrowR = () => <svg width="9" height="15" viewBox="0 0 9 15" fill="none" stroke="#323130" strokeWidth="1.300"><path d="M1 .500l7 7-7 7" /></svg>;

function VisPane() {
  return (
    <div className="flex w-[227px] shrink-0 flex-col border-x border-[#dddbd9] bg-[#f3f2f1] text-[16px] text-[#323130]">
      <div className="flex h-[64px] items-center justify-between pb-px pl-[15px] pr-[15px] text-[20px] font-semibold text-[#484644]">
        <Fit w={124}>Visualizations</Fit>
        <div className="pb-[9px]"><ArrowR /></div>
      </div>
      <div className="grid h-[206px] grid-cols-[repeat(6,21px)] content-start gap-x-[14px] gap-y-[9px] pl-[7px]">
        {V.map((v, i) => (
          <svg key={i} width="21" height="21" viewBox="0 0 21 21" fill="none" stroke={D} strokeWidth="1.400" className="block overflow-visible">{v}</svg>
        ))}
      </div>
      <div className="flex h-[46px] gap-[26px] border-t border-[#dddbd9] pl-[15px] pt-[10px]">
        <div className="flex w-[50px] flex-col items-center">
          <svg width="26" height="26" viewBox="0 0 26 26" fill="none" stroke="#252423" strokeWidth="1.400"><path d="M1 1h19" /><path d="M1 5h24v7H1zM1 16.500h24v7H1z" strokeDasharray="3 1.500" /></svg>
          <div className="mt-[4px] h-[5px] w-[50px] shrink-0 rounded-full bg-[#f2c811]" />
        </div>
        <svg width="24" height="26" viewBox="0 0 24 26" fill="none" stroke="#252423" strokeWidth="1.400" className="-ml-[14px]"><rect x="1" y="1" width="19" height="5.500" rx="1.500" /><path d="M20 3.500h3v6.500H11v3" /><rect x="8.500" y="13" width="5" height="11.500" /></svg>
      </div>
      <div className="flex h-[29px] items-end pl-[15px]"><Fit w={42}>Values</Fit></div>
      <div className="ml-[5px] mt-[5px] flex h-[35px] w-[212px] items-center rounded-sm border border-dashed border-[#c0bebc] bg-white pb-[2px] pl-[13px]"><Fit w={133}>Add data fields here</Fit></div>
      <div className="mt-[15px] flex h-[30px] items-center pl-[17px] text-[20px] font-semibold text-[#484644]"><Fit w={116}>Drill through</Fit></div>
      <div className="mt-[14px] flex h-6 items-center pl-[11px]"><Fit w={83}>Cross-report</Fit></div>
      <div className="mt-[12px] flex h-6 items-center pl-[22px]">
        <Fit w={20}>Off</Fit>
        <div className="ml-[5px] h-[15px] w-[15px] rounded-full border-2 border-[#605e5c] bg-white" />
        <div className="h-[3px] w-[22px] rounded-r border border-l-0 border-[#605e5c]" />
      </div>
      <div className="mt-[20px] flex h-6 items-center pl-[11px]"><Fit w={93}>Keep all filters</Fit></div>
      <div className="mt-[12px] flex h-6 items-center pl-[22px]">
        <Fit w={19}>On</Fit>
        <div className="ml-[6px] h-[3px] w-[23px] rounded-l border border-r-0 border-[#605e5c]" />
        <div className="h-[15px] w-[15px] rounded-full bg-[#605e5c]" />
      </div>
      <div className="ml-[5px] mt-[15px] flex h-[32px] w-[212px] items-center rounded-sm border border-dashed border-[#c0bebc] bg-white pl-[10px]"><Fit w={189}>Add drill-through fields here</Fit></div>
    </div>
  );
}

const tabs: [string, string, number][] = [
  ["0 Overview", "w-[125px]", 74],
  ["1 Demographic and Profile", "w-[228px]", 177],
  ["2 Results", "w-[110px]", 58],
  ["3 Clickstream", "w-[139px]", 88],
  ["4 EEE2014J Summary", "w-[191px]", 139],
  ["5 EE2014J Final Results", "w-[201px]", 151],
  ["6 EEE2014J Scores & Clicks", "w-[229px]", 178],
];

function PageTabs() {
  return (
    <div className="flex h-[44px] shrink-0 border-r border-[#dddbd9] bg-[#f3f2f1] text-[15px] text-[#252423]">
      <div className="flex w-[50px] shrink-0 items-center justify-between border-r border-[#a8a6a4] pb-1 pl-[7px] pr-[8px]">
        <svg width="6" height="10" viewBox="0 0 6 10" fill="#c8c6c4"><path d="M6 0v10L0 5z" /></svg>
        <svg width="6" height="10" viewBox="0 0 6 10" fill="#000"><path d="M0 0v10l6-5z" /></svg>
      </div>
      {tabs.map(([t, w, tw]) => (
        <div key={t} className={"flex shrink-0 items-center justify-center border-r border-[#c8c6c4] pt-px " + w}><Fit w={tw}>{t}</Fit></div>
      ))}
      <div className="relative flex w-[239px] shrink-0 items-center justify-center border-b-[5px] border-r border-b-[#f2c811] border-r-[#c8c6c4] bg-white pt-[6px] font-medium">
        <Fit w={187}>7 EEE2014J Model Selection</Fit>
        <span className="absolute right-[6px] top-px text-[13px]">x</span>
      </div>
      <div className="flex w-[41px] items-center pl-[24px] pt-px"><Fit w={17}>8 E</Fit></div>
      <div className="mt-[2px] flex h-10 w-[49px] shrink-0 items-center justify-center bg-[#f2c811]">
        <svg width="14" height="14" viewBox="0 0 14 14" stroke="#7a6a3a" strokeWidth="3.500"><path d="M0 7h14M7 0v14" /></svg>
      </div>
    </div>
  );
}

const T: { n: string; on?: boolean; active?: boolean; svg: React.ReactNode }[] = [
  { n: "taskview", svg: <g fill="none" stroke="#fff" strokeWidth="1.200"><rect x="6" y="10" width="12" height="10" /><path d="M5.500 5v3h13V5M5.500 24v-2.500h13V24M24 5v5M24 15v9" /><path d="M24 11v3" strokeWidth="3" /></g> },
  { n: "edge", svg: <><defs><linearGradient id="eg" x1="0" y1="0" x2="1" y2="0.300"><stop offset="0" stopColor="#2aa9ea" /><stop offset="0.600" stopColor="#35c8d8" /><stop offset="1" stopColor="#6be06a" /></linearGradient></defs><circle cx="15" cy="15" r="15" fill="#0a6fc8" /><path d="M0 15C0 5 8 0 15 0c9 0 15 6 15 12 0 5-4 8-8 8-3 0-4-1-3-3 1-1 1-8-7-8C5 9 0 14 0 15z" fill="url(#eg)" /><path d="M9 17c0 6 5 10 10 10 4 0 7-2 9-4-3 5-8 7-13 7C10 30 8 22 9 17z" fill="#0c3f86" /><path d="M19 17c1-1 1-5-2-7 6-1 13 2 13 8 0 4-3 6-6 5-4 1-7-3-5-6z" fill="none" /></> },
  { n: "explorer", on: true, svg: <><path d="M1 3h12l2 3h14v20H1z" fill="#ffd968" /><path d="M1 3h12l2 3H1z" fill="#d99a00" /><path d="M7 26V16h17v10h-4v-5h-9v5z" fill="#3b97dd" /></> },
  { n: "s", svg: <><path d="M20 0c-2 1-12 8-13 11 0 4 4 5 9 9-3 3-6 5-7 10 5-5 13-8 13-11 0-4-5-6-8-9 3-3 5-6 6-10z" fill="#2f9cf0" /><path d="M20 0c-2 1-12 8-13 11l7-1c3-3 5-6 6-10z" fill="#3f6ae0" /><path d="M9 30c5-5 13-8 13-11l-6 1c-3 3-6 5-7 10z" fill="#35b6ee" /></> },
  { n: "paint", on: true, svg: <><ellipse cx="14" cy="17" rx="12.500" ry="11.500" fill="#cfe3f2" transform="rotate(-25 14 17)" /><circle cx="6" cy="17" r="2.500" fill="#e84a3a" /><circle cx="10" cy="11" r="2.500" fill="#4fb54a" /><circle cx="16" cy="8" r="2.700" fill="#f5b81c" /><circle cx="13" cy="18" r="2" fill="#3b4a55" /><path d="M26 4 17 27" stroke="#e08a2e" strokeWidth="3" /><path d="M27 1l-4 4 3 3 4-5z" fill="#caa06b" /></> },
  { n: "snip", svg: <><ellipse cx="11" cy="17" rx="11" ry="4.500" fill="#8a8a8a" transform="rotate(-15 11 17)" /><ellipse cx="14" cy="9" rx="12" ry="7" fill="#f5f5f5" stroke="#d13438" strokeWidth="1.500" transform="rotate(-18 14 9)" /><path d="M19 2l-6 16M8 10l12 9" stroke="#888" strokeWidth="1.300" /><g fill="none" stroke="#1b7fcc" strokeWidth="2"><ellipse cx="24" cy="19" rx="4.500" ry="2.500" transform="rotate(20 24 19)" /><ellipse cx="18" cy="24" rx="2.500" ry="4" transform="rotate(20 18 24)" /></g></> },
  { n: "chrome", on: true, svg: <><circle cx="15" cy="15" r="14" fill="#fdd23e" /><path d="M2.900 8A14 14 0 0 1 27.200 8H15L8.900 18.500z" fill="#db4437" /><path d="M2.900 8A14 14 0 0 0 15 29l6-10.500-12.100 0z" fill="#1da15f" /><circle cx="15" cy="15" r="6.500" fill="#fff" /><circle cx="15" cy="15" r="5" fill="#4285f4" /></> },
  { n: "notepad", on: true, svg: <><path d="M23 3h3l2 21-5 2z" fill="#b98a3a" /><path d="M11 2l13 2-8 22L1 22z" fill="#3d9aa8" /><path d="M11 2l13 2-4 12L5 14z" fill="#a5d8e0" /><path d="M24 4l2 20-10 2z" fill="#d8ecef" /><path d="M11 1l14 2v2L10 3.500z" fill="#9aa3a8" /></> },
  { n: "pen", svg: <g fill="none" stroke="#fff" strokeWidth="1.600" strokeLinejoin="round"><path d="M5 25V11L22 3v7M5 25l5-2V14l12-5" /><path d="M13 17l11-5v4l-7 3.500v7l-4 1.500z" fill="#fff" /><path d="M19 21l5-2.500V22l-5 3z" fill="#fff" /></g> },
  { n: "printer", svg: <><rect width="30" height="30" fill="#0096d6" /><g fill="none" stroke="#fff" strokeWidth="1.100"><path d="M11 12V8h8v4M16 20h-4v2h5M9 19H8v-6.500h14V15M11 15h7M12 17.500h5" /><rect x="18.500" y="15.500" width="4" height="7" /></g></> },
  { n: "code", svg: <><path d="M22 0l8 4v22l-8 4L8 17 3 21 0 19.500 5 15 0 10.500 3 9l5 4z" fill="#1f8ad2" /><path d="M22 0l8 4v22l-8 4z" fill="#2ea6f0" /><path d="M22 9v12l-8-6z" fill="#23303f" /></> },
  { n: "pbi", on: true, active: true, svg: <><path d="M15 0h9.500v30H15z" fill="#e0a010" /><path d="M9 8h10v22H9z" fill="#f0b92a" /><path d="M3 15h10v15H3z" fill="#f9d55a" /></> },
  { n: "word", on: true, svg: <><rect x="7" y="1" width="22" height="27" rx="1" fill="#2b7cd3" /><rect x="7" y="1" width="22" height="7" fill="#41a5ee" /><rect x="7" y="21" width="22" height="7" fill="#103f91" /><rect x="0" y="7" width="16" height="16" rx="1" fill="#185abd" /><text x="8" y="19.500" textAnchor="middle" fontSize="12" fontWeight="700" fill="#fff" fontFamily="Open Sans">W</text></> },
  { n: "excel", on: true, svg: <><rect x="7" y="1" width="22" height="27" rx="1" fill="#21a366" /><rect x="18" y="1" width="11" height="9" fill="#33c481" /><rect x="7" y="19" width="22" height="9" fill="#185c37" /><rect x="0" y="7" width="16" height="16" rx="1" fill="#107c41" /><text x="8" y="19.500" textAnchor="middle" fontSize="12" fontWeight="700" fill="#fff" fontFamily="Open Sans">X</text></> },
];

function Taskbar() {
  return (
    <div className="flex h-[50px] bg-[linear-gradient(90deg,#24373b_0%,#2b3b3d_22%,#464541_30%,#434441_37%,#30444a_42%,#2a3a45_52%,#252f40_58%,#262a36_66%,#29242a_76%,#272029_88%,#211d20_100%)] text-white">
      <div className="flex w-[60px] items-center justify-center">
        <svg width="20" height="20" viewBox="0 0 20 20" fill="#fff"><path d="M0 3l8.500-1.200v7.700H0zM9.500 1.600 20 0v9.500H9.500zM0 10.500h8.500v7.700L0 17zM9.500 10.500H20V20L9.500 18.400z" /></svg>
      </div>
      <div className="flex w-[430px] items-center border border-[#b8b6b4] bg-[#f2f2f2] pl-[14px] text-[18.500px] text-[#323130]">
        <svg width="22" height="22" viewBox="0 0 22 22" fill="none" stroke="#252423" strokeWidth="1.600"><circle cx="13.500" cy="8" r="6.800" /><path d="M8.700 12.800 1 21" /></svg>
        <div className="pl-[13px]"><Fit w={163}>Type here to search</Fit></div>
      </div>
      <div className="-ml-px flex">
        {T.map((t) => (
          <div key={t.n} className={"relative flex w-[62.200px] justify-center pt-[10px] " + (t.active ? "bg-[#56565b]" : "")}>
            <svg width="30" height="30" viewBox="0 0 30 30" className="block">{t.svg}</svg>
            {t.on && <div className={"absolute bottom-0 h-[3px] bg-[#76b9ed] " + (t.active ? "inset-x-0" : "inset-x-[6px]")} />}
          </div>
        ))}
      </div>
      <div className="flex flex-1 items-center pl-[61px]">
        <svg width="30" height="28" viewBox="0 0 30 28"><circle cx="13" cy="13.500" r="13" fill="#fff" /><circle cx="13" cy="13.500" r="11.500" fill="#0f96d8" /><text x="13" y="21" textAnchor="middle" fontSize="21" fontWeight="700" fill="#fff" fontFamily="Open Sans">?</text><circle cx="23.500" cy="20" r="6" fill="#eba619" /><text x="23.500" y="24" textAnchor="middle" fontSize="11" fontWeight="700" fill="#fff" fontFamily="Open Sans">i</text></svg>
        <svg width="27" height="26" viewBox="0 0 27 26" className="ml-[34px]"><circle cx="12" cy="12.500" r="12" fill="#f9b52e" /><circle cx="10" cy="10" r="8" fill="#fcc64a" /><path d="M13 21a4.500 4.500 0 0 1 0-9c1-4 8-4 9 0a4.500 4.500 0 0 1 0 9z" fill="#cfe6fb" /></svg>
        <div className="pl-[11px] text-[18px]"><Fit w={38}>28°C</Fit></div>
        <svg width="17" height="10" viewBox="0 0 17 10" fill="none" stroke="#fff" strokeWidth="1.500" className="ml-[20px]"><path d="M.7 9l7.800-8 7.800 8" /></svg>
        <svg width="15" height="18" viewBox="0 0 15 18" fill="none" stroke="#fff" strokeWidth="1.300" className="ml-[15px]"><rect x="1" y="4.500" width="9" height="9" rx="1" /><path d="M10 8l4-2.500v7L10 10M2 2c2-1.500 5-1.500 8 0M2 16c2 1.500 5 1.500 8 0" /></svg>
        <svg width="20" height="15" viewBox="0 0 20 15" fill="none" stroke="#fff" strokeWidth="1.300" className="ml-[12px]"><rect x="6" y="4.500" width="12.500" height="8.500" fill="#fff" /><path d="M6 13.500H2.500V7M0 3h5v3H0zM1 0v3M4 0v3" /></svg>
        <svg width="16" height="16" viewBox="0 0 16 16" fill="none" stroke="#e0e0e0" strokeWidth="1.200" className="ml-[13px]"><path d="M1 15C1 7 7 1 15 1M5 15c0-6 4-10 10-10M9 15c0-4 2-6 6-6" /><circle cx="14" cy="14" r="1.500" fill="#fff" stroke="none" /></svg>
        <svg width="20" height="18" viewBox="0 0 20 18" fill="none" stroke="#fff" strokeWidth="1.300" className="ml-[11px]"><path d="M1 6h3l4-4v14l-4-4H1zM11 6.500c1 1.500 1 3.500 0 5M14 4.500c2 2.500 2 6.500 0 9" /><path d="M17 2.500c3 4 3 9 0 13" stroke="#888" /></svg>
        <div className="pl-[13px] text-[14.500px]"><Fit w={29}>ENG</Fit></div>
        <div className="ml-[13px] flex w-[74px] flex-col items-center text-[14.500px] leading-[22px]">
          <Fit w={52}>6:52 PM</Fit>
          <Fit w={75}>10/10/2021</Fit>
        </div>
        <svg width="20" height="22" viewBox="0 0 20 22" className="ml-[20px]"><path d="M0 1h20v15h-4l-4 4v-4H0z" fill="#fff" /><path d="M4 5h12M4 8.500h12M4 12h7" stroke="#272029" strokeWidth="1.400" /><circle cx="15" cy="15" r="5" fill="#272029" /><path d="M15 10.500c1 3-1 6-4 6.500 3 4 8 1 8-2.500 0-2-1.500-3.500-4-4z" fill="#fff" /></svg>
        <div className="ml-[25px] h-[50px] w-px bg-[#77757a]" />
      </div>
    </div>
  );
}

function Rail() {
  return (
    <div className="flex w-[51px] shrink-0 flex-col border-r border-[#dddbd9] bg-[#f3f2f1]">
      <div className="flex h-[50px] items-center justify-center border-l-[3px] border-[#f2c811] pb-px pr-[2px]">
        <svg width="18" height="18" viewBox="0 0 18 18" fill="none" stroke="#252423" strokeWidth="1.400"><path d="M.7 0v17.300H18" /><path d="M3.500 4.500h2.500v9.500H3.500zM8.500 7.500H11V14H8.500zM13.500 1.500H16V14h-2.500z" stroke="#605e5c" /></svg>
      </div>
      <div className="flex h-[46px] items-center justify-center">
        <svg width="21" height="20" viewBox="0 0 21 20" fill="none" stroke="#605e5c" strokeWidth="1.400"><path d="M.7.700h19.600v18.600H.7zM1 4h19M1 9h19M1 14h19M7 4v15M14 4v15" /></svg>
      </div>
      <div className="flex h-[54px] items-center justify-center pl-[2px]">
        <svg width="24" height="23" viewBox="0 0 24 23" fill="none" stroke="#605e5c" strokeWidth="1.400"><path d="M1 7h9v9H1zM1 10h9M14 1h9v9h-9zM14 4h9M14 13.500h9v9h-9zM14 16.500h9M5.500 7V3.500H14M5.500 16v3.500H14" /></svg>
      </div>
    </div>
  );
}

export default function App() {
  return (
    <div className="flex h-[1080px] w-[1920px] flex-col overflow-hidden bg-[#f3f2f1] font-['Open_Sans','Noto_Sans',sans-serif]">
      <TitleBar />
      <Ribbon />
      <div className="h-[3px] shrink-0 bg-[linear-gradient(180deg,#d2d0ce,#e6e5e4)]" />
      <div className="flex h-[798px] shrink-0 border-b border-[#dddbd9]">
        <Rail />
        <div className="flex w-[1602px] shrink-0 flex-col">
          <div className="flex h-[753px] shrink-0 overflow-hidden">
            <div className="flex w-[1561px] shrink-0 overflow-hidden border-r border-[#c8c6c4] bg-white pl-[114px]"><Report /></div>
            <div className="flex flex-1 flex-col items-center bg-white">
              <div className="ml-px mt-[20px]"><ArrowL /></div>
              <svg width="14" height="16" viewBox="0 0 14 16" fill="none" stroke="#605e5c" strokeWidth="1.200" className="ml-[6px] mt-[43px]"><path d="M13 .700v14.600L7 9.500H.700v-3H7z" /></svg>
              <VFit h={55} className="mt-[14px] w-6 text-[18px] font-semibold leading-6 text-[#252423]">Filters</VFit>
            </div>
          </div>
          <PageTabs />
        </div>
        <VisPane />
        <div className="flex flex-1 flex-col items-center">
          <div className="mt-[20px]"><ArrowL /></div>
          <VFit h={51} className="mr-[4px] mt-[41px] w-6 text-[18px] font-semibold leading-6 text-[#3b3a39]">Fields</VFit>
        </div>
      </div>
      <div className="flex h-[29px] shrink-0 items-center pl-[6px] text-[15px] text-[#484644]"><Fit w={82}>Page 8 of 10</Fit></div>
      <Taskbar />
    </div>
  );
}
